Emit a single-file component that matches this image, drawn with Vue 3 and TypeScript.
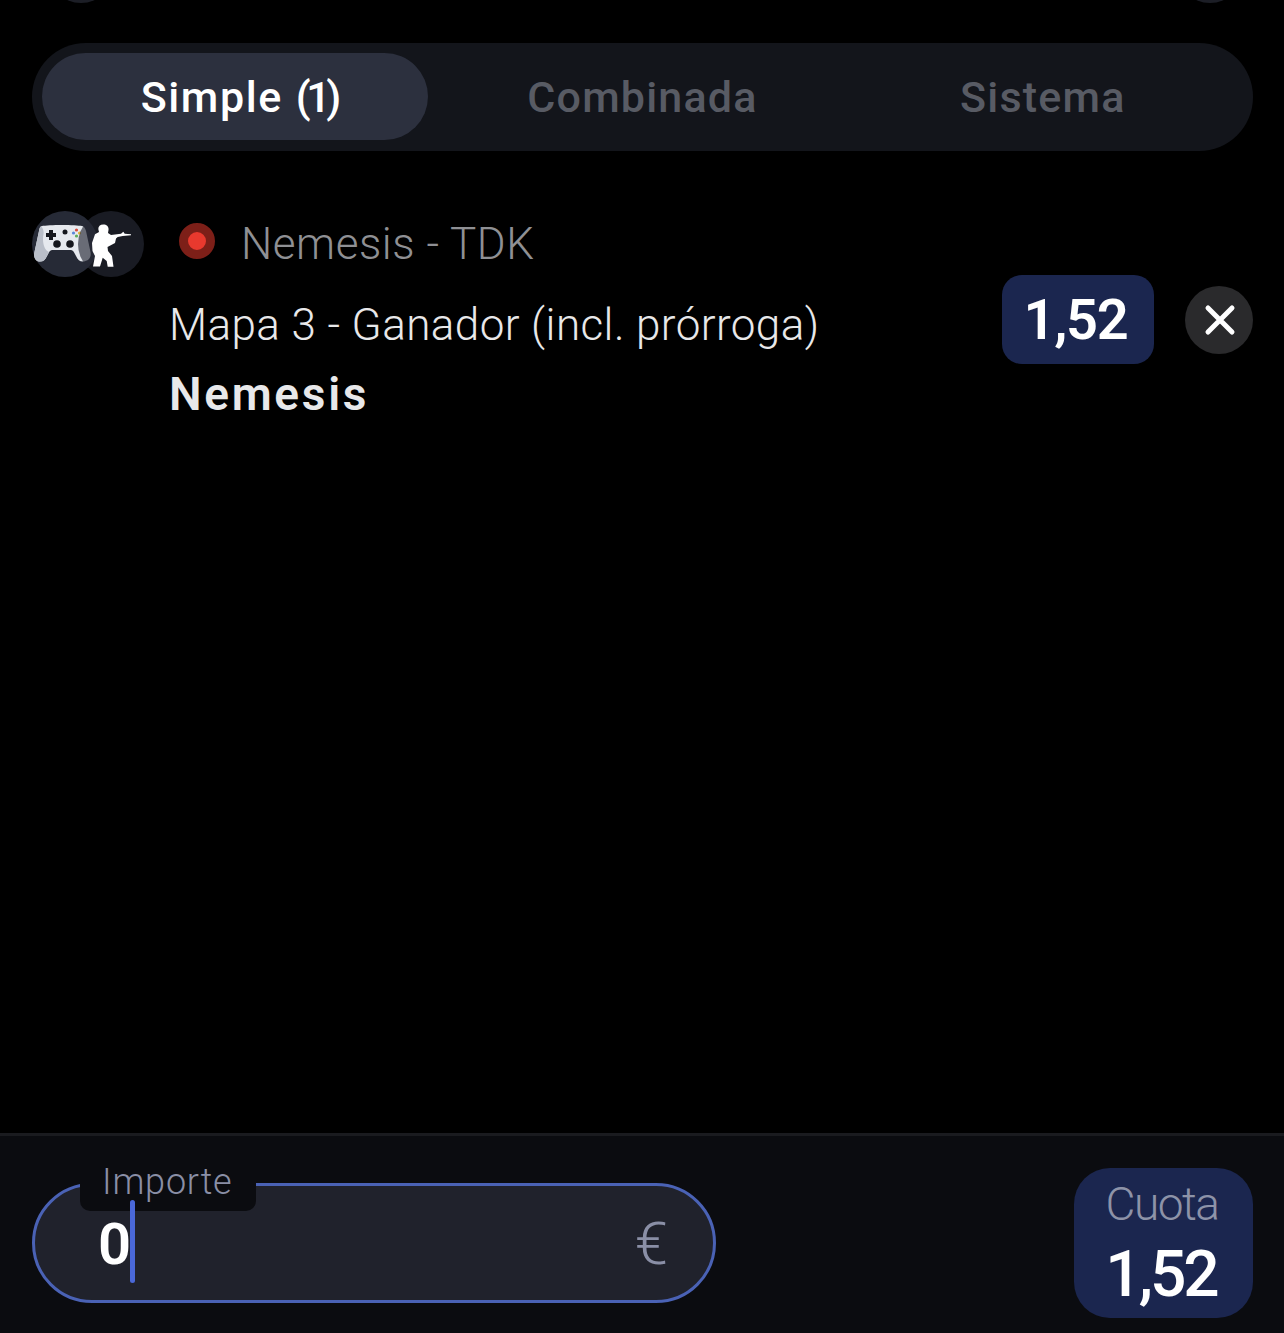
<template>
  <div class="page">
    <!-- bottom edge of the header buttons, cut off by the top of the screenshot -->
    <div class="top-edge">
      <span class="edge-circle"></span>
      <span class="edge-circle"></span>
    </div>

    <div class="tabs">
      <div v-for="(tab, i) in tabs" :key="tab.label" class="tab" :class="{ active: i === 0 }">
        <span class="tab-text">{{ tab.label }}<span v-if="tab.count" class="count">({{ tab.count }})</span></span>
      </div>
    </div>

    <div class="selection">
      <div class="icons">
        <div class="circle">
          <svg class="pad" viewBox="0 0 57 40">
            <path d="M8 2 C14 0.500 42 0.500 48 2 C50 2.500 51 4 52 7 L56.500 28 C57.500 33 55 37 50 37.500 C46 38 44 36 42 32 C40 28 39 26 37 26 H18 C16 26 15 28 13 32 C11 36 9 38 5 37.500 C1 37 -0.500 33 0.500 28 L5 7 C5.500 4 6 2.500 8 2 Z" fill="#e6e9ee" />
            <path d="M7 2.500 C6 3 5.500 4.500 5 7 L0.500 28 C-0.500 33 1 37 5 37.500 C9 38 11 36 13 32 L15 28 C10 26 8 18 9.500 10 C10 7 9 4 7 2.500 Z" fill="#b9bec8" />
            <path d="M15 6 H19 V9 H22 V13 H19 V16 H15 V13 H12 V9 H15 Z" fill="#15171d" />
            <circle cx="31" cy="8" r="2.500" fill="#15171d" />
            <circle cx="23" cy="20" r="3.800" fill="#15171d" />
            <circle cx="36" cy="20" r="3.800" fill="#15171d" />
            <circle cx="42.500" cy="6" r="1.600" fill="#d94b3d" />
            <circle cx="39.500" cy="9" r="1.600" fill="#5a86d8" />
            <circle cx="45.500" cy="9" r="1.600" fill="#e0b23c" />
            <circle cx="42.500" cy="12" r="1.600" fill="#5fae5b" />
          </svg>
        </div>
        <div class="circle second">
          <svg class="soldier" viewBox="0 0 44 46">
            <path d="M14.300 1.500 C18 1.500 20 4 19.500 7 L19 10 L22 12 L32 10.700 L34.300 8.700 L35.700 10.700 L42 11.300 L42 12.300 L33.700 13 L28.700 14 L27 15.500 L26 20 L18.500 24 L19 28 L23 33 L24.500 43.700 L18.700 43.700 L17.700 38 L13.700 34.700 L11 43.500 L4 43.500 L6 33 L3.500 28 L3 20 L6 11.300 L10 9 L9.300 6 C9.300 3.500 11 1.500 14.300 1.500 Z" fill="#ffffff" />
          </svg>
        </div>
      </div>

      <div class="details">
        <div class="match">
          <span class="live-dot"></span>
          <span class="match-name">Nemesis - TDK</span>
        </div>
        <div class="market">Mapa 3 - Ganador (incl. prórroga)</div>
        <div class="pick">Nemesis</div>
      </div>

      <div class="odds">1,52</div>
      <button class="remove" type="button" aria-label="Quitar">
        <svg viewBox="0 0 32 32" width="32" height="32">
          <path d="M4 4 L28 28 M28 4 L4 28" stroke="#fff" stroke-width="5" stroke-linecap="round" fill="none" />
        </svg>
      </button>
    </div>

    <div class="footer">
      <div class="amount">
        <div class="amount-label">Importe</div>
        <span class="amount-value">0</span>
        <span class="caret"></span>
        <span class="currency">€</span>
      </div>
      <div class="total">
        <span class="total-label">Cuota</span>
        <span class="total-value">1,52</span>
      </div>
    </div>
  </div>
</template>

<script setup lang="ts">
interface Tab {
  label: string
  count?: number
}

const tabs: Tab[] = [{ label: 'Simple', count: 1 }, { label: 'Combinada' }, { label: 'Sistema' }]
</script>

<style>
html,
body {
  background: #000;
}
</style>

<style scoped>
.page {
  height: 1333px;
  display: flex;
  flex-direction: column;
  background: #000;
  color: #fff;
  font-family: Roboto, "Liberation Sans", sans-serif;
  overflow: hidden;
}

.top-edge {
  height: 3px;
  padding: 0 41px 0 48px;
  display: flex;
  justify-content: space-between;
  align-items: flex-end;
  overflow: hidden;
}

.edge-circle {
  flex: none;
  width: 66px;
  height: 66px;
  border-radius: 50%;
  background: #1c1e26;
}

.tabs {
  margin: 40px 31px 0 32px;
  height: 108px;
  padding: 10px;
  box-sizing: border-box;
  display: flex;
  background: #13151b;
  border-radius: 54px;
}

.tab {
  position: relative;
  flex: 1;
  display: flex;
  align-items: center;
  justify-content: center;
  font-size: 43px;
  font-weight: 500;
  letter-spacing: 1.2px;
  color: #585b64;
}

.tab.active {
  color: #fff;
  letter-spacing: 1.6px;
}

.tab.active::before {
  content: "";
  position: absolute;
  left: 0;
  right: 14px;
  top: 0;
  bottom: 1px;
  border-radius: 44px;
  background: #2c303e;
}

.tab-text {
  position: relative;
}

.count {
  margin: 0 7px 0 13px;
  letter-spacing: -4.5px;
}

.selection {
  margin: 60px 31px 0 32px;
  display: flex;
  align-items: flex-start;
  flex: 1;
}

.icons {
  flex: none;
  display: flex;
  width: 138px;
}

.circle {
  flex: none;
  width: 66px;
  height: 66px;
  border-radius: 50%;
  background: #262a36;
  display: flex;
  align-items: center;
  justify-content: center;
}

.circle.second {
  margin-left: -20px;
  background: rgba(38, 42, 54, 0.65);
  position: relative;
}

.pad {
  flex: none;
  width: 57px;
  height: 40px;
  margin-left: -5px;
}

.soldier {
  flex: none;
  width: 44px;
  height: 46px;
  margin-top: 3px;
}

.details {
  flex: 1;
}

.match {
  display: flex;
  align-items: center;
  height: 66px;
}

.live-dot {
  flex: none;
  width: 18px;
  height: 18px;
  margin: -6px 0 0 9px;
  border: 9px solid #7d1f18;
  border-radius: 50%;
  background: #e8392e;
}

.match-name {
  margin-left: 26px;
  font-size: 44px;
  font-weight: 300;
  letter-spacing: 0.55px;
  color: #8f9094;
}

.market {
  margin: 22px 0 0 -1px;
  font-size: 44px;
  font-weight: 300;
  line-height: 52px;
  letter-spacing: 0.42px;
  color: #e8e8ea;
}

.pick {
  margin: 17px 0 0 -1px;
  font-size: 46px;
  font-weight: 600;
  line-height: 52px;
  letter-spacing: 2.7px;
  color: #e8e8ea;
}

.odds {
  flex: none;
  width: 152px;
  height: 89px;
  margin-top: 64px;
  padding-right: 5px;
  box-sizing: border-box;
  display: flex;
  align-items: center;
  justify-content: center;
  border-radius: 20px;
  background: #1b264f;
  font-size: 56px;
  font-weight: 600;
  letter-spacing: -1.3px;
}

.remove {
  flex: none;
  width: 68px;
  height: 68px;
  margin: 75px 0 0 31px;
  padding: 0 0 0 2px;
  border: 0;
  border-radius: 50%;
  background: #2a2a2c;
  display: flex;
  align-items: center;
  justify-content: center;
}

.footer {
  flex: none;
  height: 200px;
  box-sizing: border-box;
  border-top: 3px solid #1a1b1f;
  padding: 32px 31px 15px 32px;
  display: flex;
  align-items: center;
  justify-content: space-between;
  background: #0b0c10;
}

.amount {
  position: relative;
  width: 684px;
  height: 120px;
  box-sizing: border-box;
  border: 3px solid #4a62b5;
  border-radius: 60px;
  background: #20222c;
  display: flex;
  align-items: center;
  padding: 0 45px 0 63px;
}

.amount-label {
  position: absolute;
  left: 45px;
  top: -19px;
  width: 176px;
  height: 44px;
  box-sizing: border-box;
  padding-left: 22px;
  border-radius: 0 0 10px 10px;
  background: #0b0c10;
  font-size: 36px;
  font-weight: 300;
  line-height: 30px;
  letter-spacing: 0.8px;
  color: #8a8fa6;
}

.amount-value {
  font-size: 58px;
  font-weight: 600;
  margin-top: 2px;
}

.caret {
  position: absolute;
  left: 95px;
  top: 14px;
  width: 5px;
  height: 83px;
  border-radius: 3px;
  background: #4a68d8;
}

.currency {
  margin-left: auto;
  font-size: 60px;
  font-weight: 300;
  color: #8a8fa6;
}

.total {
  flex: none;
  width: 179px;
  height: 150px;
  border-radius: 36px;
  background: #1b264f;
  display: flex;
  flex-direction: column;
  align-items: center;
  justify-content: center;
}

.total-label {
  margin: -2px 3px 0 0;
  font-size: 46px;
  font-weight: 300;
  line-height: 54px;
  letter-spacing: -1.5px;
  color: #8d93a8;
}

.total-value {
  margin: 12px 5px 0 0;
  font-size: 64px;
  font-weight: 500;
  line-height: 64px;
  letter-spacing: -3px;
}
</style>
